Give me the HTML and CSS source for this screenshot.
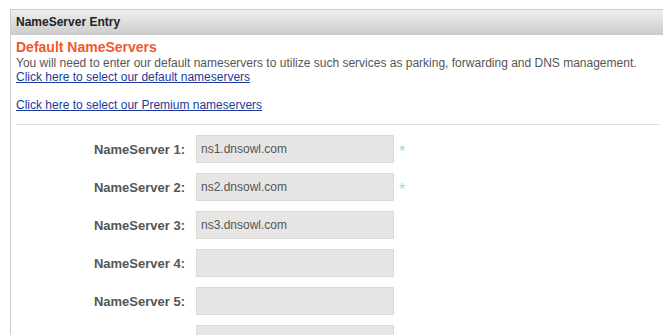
FILE: index.html
```html
<!DOCTYPE html>
<html lang="en">
<head>
    <meta charset="UTF-8">
    <title>NameServer Entry</title>
    <link rel="stylesheet" href="styles.css">
</head>
<body>
    <div class="panel">
        <div class="panel-head">NameServer Entry</div>
        <div class="panel-body">
            <div class="title">Default NameServers</div>
            <div class="info">
                You will need to enter our default nameservers to utilize such services as parking, forwarding and DNS management.<br>
                <a href="#">Click here to select our default nameservers</a><br>
                <br>
                <a href="#">Click here to select our Premium nameservers</a>
            </div>
            <div class="divider"></div>
            <div class="ns-form">
                <div class="ns-row">
                    <label class="ns-label">NameServer 1:</label>
                    <input class="ns-input" type="text" value="ns1.dnsowl.com">
                    <span class="req">*</span>
                </div>
                <div class="ns-row">
                    <label class="ns-label">NameServer 2:</label>
                    <input class="ns-input" type="text" value="ns2.dnsowl.com">
                    <span class="req">*</span>
                </div>
                <div class="ns-row">
                    <label class="ns-label">NameServer 3:</label>
                    <input class="ns-input" type="text" value="ns3.dnsowl.com">
                </div>
                <div class="ns-row">
                    <label class="ns-label">NameServer 4:</label>
                    <input class="ns-input" type="text" value="">
                </div>
                <div class="ns-row">
                    <label class="ns-label">NameServer 5:</label>
                    <input class="ns-input" type="text" value="">
                </div>
                <div class="ns-row">
                    <label class="ns-label">NameServer 6:</label>
                    <input class="ns-input" type="text" value="">
                </div>
            </div>
        </div>
    </div>
</body>
</html>
```
FILE: styles.css
```css
html, body {
    overflow: hidden;
}
body {
    margin: 0;
    padding: 9px 0 0 10px;
    font-family: "Liberation Sans", Arial, sans-serif;
    font-size: 12px;
    color: #555;
    background: #fff;
}
.panel {
    width: 654px;
    border: 1px solid #ccc;
    border-bottom: none;
}
.panel-head {
    height: 25px;
    line-height: 25px;
    padding-left: 5px;
    font-weight: bold;
    font-size: 12px;
    color: #222;
    background: linear-gradient(#eeeeee, #cccccc);
}
.panel-body {
    padding: 4px 5px 0 5px;
}
.title {
    color: #f0592b;
    font-weight: bold;
    font-size: 14px;
    line-height: 17px;
}
.info {
    line-height: 14px;
}
.info a {
    color: #1b3a9c;
}
.divider {
    margin-top: 12px;
    border-top: 1px solid #dddddd;
}
.ns-form {
    padding-top: 10px;
    display: flex;
    flex-direction: column;
    gap: 10px;
}
.ns-row {
    display: flex;
    align-items: center;
}
.ns-label {
    width: 169px;
    text-align: right;
    font-weight: bold;
    font-size: 13px;
    color: #555;
}
.ns-input {
    margin-left: 11px;
    width: 198px;
    height: 28px;
    box-sizing: border-box;
    border: 1px solid #dcdad8;
    background: #e8e6e4;
    padding: 0 4px;
    font-family: "Liberation Sans", Arial, sans-serif;
    font-size: 12px;
    color: #555;
    outline: none;
}
.req {
    margin-left: 5px;
    padding-top: 6px;
    color: #9fd3f2;
    font-size: 16px;
    line-height: 16px;
}
```
